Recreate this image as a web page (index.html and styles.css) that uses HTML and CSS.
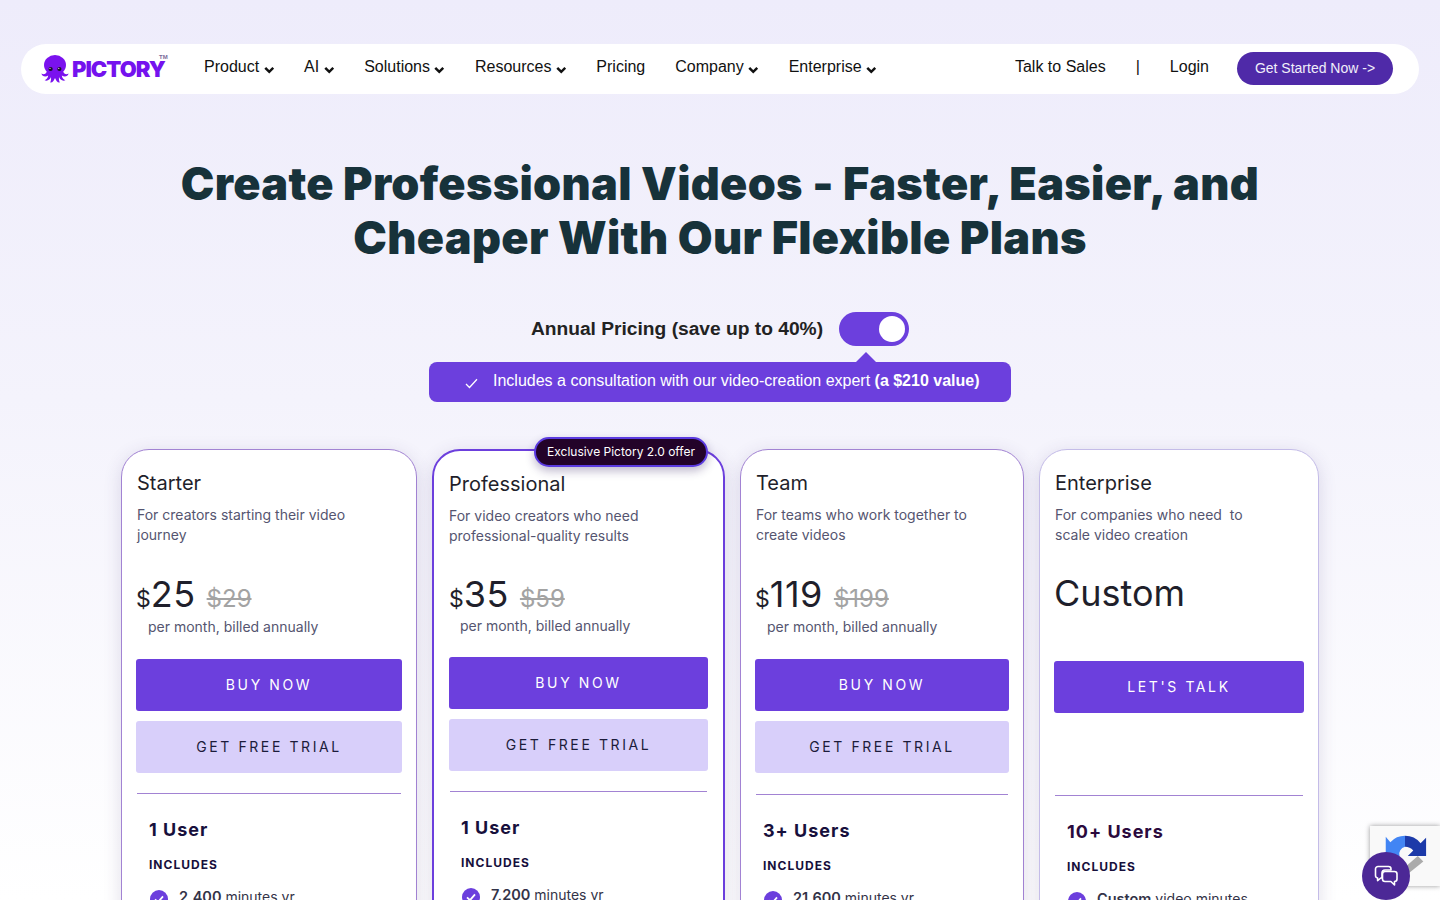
FILE: index.html
```html
<!DOCTYPE html>
<html lang="en">
<head>
<meta charset="utf-8">
<title>Pictory Pricing</title>
<link rel="stylesheet" href="styles.css">
</head>
<body>
<header class="nav">
  <a class="logo">
    <svg class="logo-mark" viewBox="0 0 28 28" width="28" height="28" aria-hidden="true">
      <g fill="#7a12ee">
        <ellipse cx="14" cy="10" rx="11" ry="10"/>
        <path d="M6 16 C5 19 3 20 .4 18.6 C1 21.5 4.5 22.6 7.2 20.6 C6.8 23 5.6 24.6 3.6 25.2 C6.4 26.6 9 24.6 10 22 C10.2 24.4 10 26 9.2 27.4 C11.4 27.8 13 25.8 13.6 23.4 L14.4 23.4 C15 25.8 16.6 27.8 18.8 27.4 C18 26 17.8 24.4 18 22 C19 24.6 21.6 26.6 24.4 25.2 C22.4 24.6 21.2 23 20.8 20.6 C23.5 22.6 27 21.5 27.6 18.6 C25 20 23 19 22 16 Z"/>
      </g>
      <circle cx="9.6" cy="14" r="2.1" fill="#1c0b2e"/>
      <circle cx="18.4" cy="14" r="2.1" fill="#1c0b2e"/>
      <circle cx="9" cy="13.3" r=".6" fill="#fff"/>
      <circle cx="17.8" cy="13.3" r=".6" fill="#fff"/>
    </svg>
    <span class="logo-text">PICTORY</span>
    <span class="logo-tm">TM</span>
  </a>
  <nav class="nav-links">
    <a class="nav-link">Product <svg class="caret" viewBox="0 0 10 7"><path d="M1.2 1.4 5 5.2 8.8 1.4"/></svg></a>
    <a class="nav-link">AI <svg class="caret" viewBox="0 0 10 7"><path d="M1.2 1.4 5 5.2 8.8 1.4"/></svg></a>
    <a class="nav-link">Solutions <svg class="caret" viewBox="0 0 10 7"><path d="M1.2 1.4 5 5.2 8.8 1.4"/></svg></a>
    <a class="nav-link">Resources <svg class="caret" viewBox="0 0 10 7"><path d="M1.2 1.4 5 5.2 8.8 1.4"/></svg></a>
    <a class="nav-link">Pricing</a>
    <a class="nav-link">Company <svg class="caret" viewBox="0 0 10 7"><path d="M1.2 1.4 5 5.2 8.8 1.4"/></svg></a>
    <a class="nav-link">Enterprise <svg class="caret" viewBox="0 0 10 7"><path d="M1.2 1.4 5 5.2 8.8 1.4"/></svg></a>
  </nav>
  <div class="nav-right">
    <a class="nav-link">Talk to Sales</a>
    <span class="nav-link">|</span>
    <a class="nav-link">Login</a>
    <a class="nav-cta">Get Started Now -&gt;</a>
  </div>
</header>

<main>
  <h1 class="headline">Create Professional Videos - Faster, Easier, and<br>Cheaper With Our Flexible Plans</h1>

  <div class="toggle-row">
    <span class="toggle-label">Annual Pricing (save up to 40%)</span>
    <span class="toggle"><span class="knob"></span></span>
  </div>

  <div class="banner">
    <svg class="banner-check" viewBox="0 0 14 12"><path d="M1 6.6 4.8 10.4 13 1.4"/></svg>
    <span>Includes a consultation with our video-creation expert <b>(a $210 value)</b></span>
  </div>

  <section class="plans">
    <article class="plan plan-starter">
      <h2 class="plan-name">Starter</h2>
      <p class="plan-desc">For creators starting their video journey</p>
      <div class="price"><span class="cur">$</span><span class="amt">25</span><s class="old">$29</s></div>
      <p class="per">per month, billed annually</p>
      <a class="btn btn-buy">BUY NOW</a>
      <a class="btn btn-trial">GET FREE TRIAL</a>
      <hr class="rule">
      <div class="features">
        <h3 class="users">1 User</h3>
        <h4 class="includes">INCLUDES</h4>
        <ul class="feature-list">
          <li><svg class="tick" viewBox="0 0 18 18"><circle cx="9" cy="9" r="9"/><path d="M5 9.4 8 12.2 13 6.4"/></svg><span><b>2,400</b> minutes yr</span></li>
        </ul>
      </div>
    </article>

    <article class="plan plan-pro">
      <span class="offer">Exclusive Pictory 2.0 offer</span>
      <h2 class="plan-name">Professional</h2>
      <p class="plan-desc">For video creators who need professional-quality results</p>
      <div class="price"><span class="cur">$</span><span class="amt">35</span><s class="old">$59</s></div>
      <p class="per">per month, billed annually</p>
      <a class="btn btn-buy">BUY NOW</a>
      <a class="btn btn-trial">GET FREE TRIAL</a>
      <hr class="rule">
      <div class="features">
        <h3 class="users">1 User</h3>
        <h4 class="includes">INCLUDES</h4>
        <ul class="feature-list">
          <li><svg class="tick" viewBox="0 0 18 18"><circle cx="9" cy="9" r="9"/><path d="M5 9.4 8 12.2 13 6.4"/></svg><span><b>7,200</b> minutes yr</span></li>
        </ul>
      </div>
    </article>

    <article class="plan plan-team">
      <h2 class="plan-name">Team</h2>
      <p class="plan-desc">For teams who work together to create videos</p>
      <div class="price"><span class="cur">$</span><span class="amt">119</span><s class="old">$199</s></div>
      <p class="per">per month, billed annually</p>
      <a class="btn btn-buy">BUY NOW</a>
      <a class="btn btn-trial">GET FREE TRIAL</a>
      <hr class="rule">
      <div class="features">
        <h3 class="users">3+ Users</h3>
        <h4 class="includes">INCLUDES</h4>
        <ul class="feature-list">
          <li><svg class="tick" viewBox="0 0 18 18"><circle cx="9" cy="9" r="9"/><path d="M5 9.4 8 12.2 13 6.4"/></svg><span><b>21,600</b> minutes yr</span></li>
        </ul>
      </div>
    </article>

    <article class="plan plan-ent">
      <h2 class="plan-name">Enterprise</h2>
      <p class="plan-desc">For companies who need&nbsp; to<br>scale video creation</p>
      <div class="custom">Custom</div>
      <a class="btn btn-buy">LET'S TALK</a>
      <hr class="rule">
      <div class="features">
        <h3 class="users">10+ Users</h3>
        <h4 class="includes">INCLUDES</h4>
        <ul class="feature-list">
          <li><svg class="tick" viewBox="0 0 18 18"><circle cx="9" cy="9" r="9"/><path d="M5 9.4 8 12.2 13 6.4"/></svg><span><b>Custom</b> video minutes</span></li>
        </ul>
      </div>
    </article>
  </section>
</main>

<aside class="recaptcha">
  <svg viewBox="0 0 48 48" width="44" height="44" aria-hidden="true">
    <path d="M24 2 A22 22 0 0 1 41 10 L47 4 V24 H27 L33 18 A12 12 0 0 0 24 14 Z" fill="#1c3aa9"/>
    <path d="M24 2 A22 22 0 0 0 8 9 L3 3 V24 H18 A8 8 0 0 1 24 14 Z" fill="#4285f4"/>
    <path d="M24 46 L44 30 L38 24 L22 38 Z" fill="#ababab"/>
  </svg>
</aside>
<button class="chat" aria-label="Chat">
  <svg viewBox="0 0 24 24" width="24" height="24"><path d="M4 2.5h10.5a2.5 2.5 0 0 1 2.5 2.5v1H11a3 3 0 0 0-3 3v5H6.8L3.6 16.6V14A2.6 2.6 0 0 1 1.5 11.5V5A2.5 2.5 0 0 1 4 2.5Z"/><path d="M11 7.5h9.5A2.5 2.5 0 0 1 23 10v5a2.5 2.5 0 0 1-2.5 2.5V21l-3.6-3.5H11A2.5 2.5 0 0 1 8.5 15v-5A2.5 2.5 0 0 1 11 7.5Z"/></svg>
</button>
</body>
</html>
```

FILE: styles.css
```css
* { box-sizing: border-box; }
html { height: 900px; overflow: hidden; }
body {
  margin: 0;
  height: 900px;
  overflow: hidden;
  background: linear-gradient(180deg, #eeecfb 0, #f4f3fc 400px, #ffffff 900px);
  font-family: "Liberation Sans", Arial, sans-serif;
  color: #111;
  padding-top: 44px;
}
a { text-decoration: none; color: inherit; }

.nav {
  display: flex;
  align-items: center;
  height: 50px;
  margin: 0 21px;
  padding: 0 26px 4px 20px;
  background: #fff;
  border-radius: 25px;
}
.logo { display: flex; align-items: center; width: 163px; height: 50px; margin-top: 4px; position: relative; }
.logo-mark { flex: none; }
.logo-text {
  margin-left: 3px;
  font-family: Inter, sans-serif;
  font-weight: 900;
  font-size: 22px;
  line-height: 16px;
  letter-spacing: -1px;
  color: #7412ee;
}
.logo-tm {
  position: absolute;
  left: 118px;
  top: 10px;
  font-size: 6px;
  line-height: 6px;
  font-weight: 700;
  color: #7a6a9a;
}
.nav-links { display: flex; gap: 30px; }
.nav-link {
  display: inline-flex;
  align-items: center;
  font-size: 16px;
  line-height: 20px;
  color: #111;
  white-space: pre;
}
.caret {
  width: 10.5px;
  height: 8px;
  margin: 6px 0 0 0;
  fill: none;
  stroke: #111;
  stroke-width: 2.4;
}
.nav-right { display: flex; align-items: center; gap: 30px; margin-left: auto; }
.nav-cta {
  display: flex;
  align-items: center;
  justify-content: center;
  width: 156px;
  height: 33px;
  margin: 3px 0 0 -2px;
  padding-bottom: 2px;
  background: #4f2aa8;
  border-radius: 17px;
  color: #f1effa;
  font-size: 14px;
}

.headline {
  margin: 63px 0 0;
  text-align: center;
  font-family: Inter, sans-serif;
  font-weight: 900;
  font-size: 45px;
  line-height: 54px;
  letter-spacing: .3px;
  color: #17323a;
}

.toggle-row {
  display: flex;
  align-items: center;
  justify-content: center;
  gap: 16px;
  margin-top: 47px;
}
.toggle-label { font-size: 19.2px; font-weight: 700; color: #222; }
.toggle {
  display: flex;
  align-items: center;
  justify-content: flex-end;
  width: 70px;
  height: 34px;
  padding-right: 4px;
  background: #6c3fdd;
  border-radius: 17px;
}
.knob { width: 26px; height: 26px; border-radius: 50%; background: #fff; }

.banner {
  position: relative;
  display: flex;
  align-items: center;
  width: 582px;
  height: 40px;
  margin: 16px auto 0;
  padding: 0 0 2px 36px;
  background: #6c3fdd;
  border-radius: 8px;
  color: #fff;
  font-size: 16px;
}
.banner::before {
  content: "";
  position: absolute;
  left: 427px;
  top: -10px;
  border-left: 10px solid transparent;
  border-right: 10px solid transparent;
  border-bottom: 10px solid #6c3fdd;
}
.banner-check {
  width: 13px;
  height: 11px;
  margin-right: 15px;
  margin-top: 5px;
  fill: none;
  stroke: #fff;
  stroke-width: 1.4;
}

.plans {
  display: flex;
  align-items: flex-start;
  justify-content: center;
  gap: 15px;
  margin-top: 47px;
  font-family: Inter, sans-serif;
}
.plan {
  position: relative;
  min-height: 600px;
  padding: 19px 14px 0;
  background: #fff;
  border: 1px solid #a283d3;
  border-radius: 28px;
  box-shadow: 0 4px 18px rgba(70, 50, 120, .16);
}
.plan-starter { width: 296px; }
.plan-pro { width: 293px; padding: 19px 15px 0; border: 2px solid #6c3fdd; }
.plan-team { width: 284px; }
.plan-ent { width: 280px; border-color: #c4bce8; }

.plan-name {
  margin: 0 1px;
  font-size: 20px;
  font-weight: 400;
  line-height: 28px;
  color: #1f1f2b;
}
.plan-desc {
  max-width: 230px;
  margin: 8px 1px 0;
  font-size: 14px;
  line-height: 20px;
  color: #555570;
}
.price {
  display: flex;
  align-items: baseline;
  height: 44px;
  margin: 27px 0 0;
  line-height: 44px;
  color: #1f1f2b;
}
.cur { font-size: 23px; }
.amt { font-size: 36px; letter-spacing: .5px; }
.old { margin-left: 11px; font-size: 24px; color: #a3a3a3; }
.per {
  margin: 1px 0 0 12px;
  font-size: 14px;
  line-height: 20px;
  color: #555570;
}
.custom {
  height: 44px;
  margin: 26px 0 0;
  font-size: 36px;
  line-height: 44px;
  color: #1f1f2b;
}
.btn {
  display: flex;
  align-items: center;
  justify-content: center;
  height: 52px;
  padding-bottom: 2px;
  border-radius: 3px;
  font-size: 14px;
  letter-spacing: 2.6px;
}
.btn-buy { margin-top: 22px; background: #6c3fdd; color: #fff; }
.btn-trial { margin-top: 10px; background: #d8cffa; color: #1c1c3a; }
.rule { height: 1px; margin: 20px 1px 0; border: 0; background: #a283d3; }

.features { padding: 0 13px; }
.users {
  margin: 25px 0 0;
  font-size: 18px;
  font-weight: 700;
  line-height: 22px;
  letter-spacing: 1px;
  color: #17103c;
}
.includes {
  margin: 16px 0 0;
  font-size: 12px;
  font-weight: 700;
  line-height: 16px;
  letter-spacing: 1px;
  color: #17103c;
}
.feature-list { margin: 14px 0 0; padding: 0; list-style: none; }
.feature-list li {
  display: flex;
  gap: 11px;
  font-size: 14px;
  line-height: 20px;
  color: #333348;
}
.feature-list b { font-size: 14.5px; font-weight: 600; }
.tick { flex: none; width: 18px; height: 18px; margin: 3px 0 0 1px; }
.tick circle { fill: #6c3fdd; }
.tick path { fill: none; stroke: #fff; stroke-width: 1.8; }

.plan-pro .plan-name,
.plan-pro .plan-desc { margin-left: 0; }
.plan-pro .price { margin-top: 26px; }
.plan-pro .per { margin: 0 0 0 11px; }
.plan-pro .btn-buy { margin-top: 21px; }
.plan-pro .features { padding: 0 12px; }
.plan-team .rule { margin-top: 21px; }
.plan-team .features { padding: 0 8px; }
.plan-ent .users { color: #2b0a3d; }
.plan-ent .btn-buy { margin-top: 46px; }
.plan-ent .rule { margin-top: 82px; }

.offer {
  position: absolute;
  left: 100px;
  top: -14px;
  display: flex;
  align-items: center;
  justify-content: center;
  width: 174px;
  height: 30px;
  padding-bottom: 2px;
  background: #230329;
  border: 2px solid #5b3be0;
  border-radius: 15px;
  box-shadow: 0 4px 10px rgba(40, 20, 90, .3);
  color: #fff;
  font-size: 12px;
  white-space: nowrap;
}

.recaptcha {
  position: fixed;
  right: 0;
  top: 826px;
  width: 70px;
  height: 60px;
  padding: 8px 0 0 13px;
  background: #f9f9f9;
  box-shadow: 0 0 5px rgba(0, 0, 0, .4);
}
.chat {
  position: fixed;
  left: 1362px;
  top: 852px;
  display: flex;
  align-items: center;
  justify-content: center;
  width: 48px;
  height: 48px;
  padding: 0;
  border: 0;
  border-radius: 50%;
  background: #4c2896;
}
.chat path { fill: #4c2896; stroke: #fff; stroke-width: 1.6; stroke-linejoin: round; }
```
